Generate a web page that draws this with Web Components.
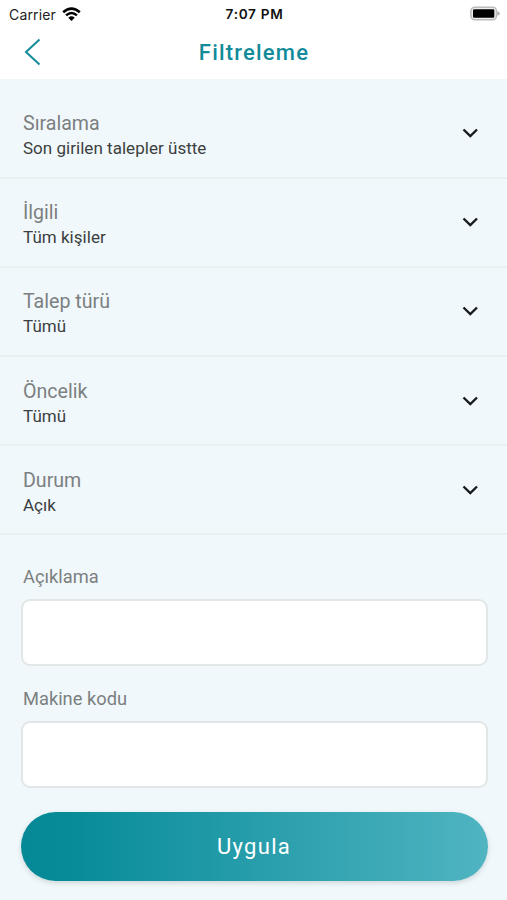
<!DOCTYPE html>
<html lang="tr">
<head>
<meta charset="utf-8">
<title>Filtreleme</title>
<style>
html,body{margin:0;height:100%;background:#f0f8fb}
body{font-family:Roboto,"Open Sans",sans-serif;overflow:hidden}
</style>
</head>
<body>
<filter-screen></filter-screen>
<script>
const define = (name, html) => {
  const t = document.createElement('template');
  t.innerHTML = html;
  customElements.define(name, class extends HTMLElement {
    constructor() {
      super();
      this.attachShadow({mode: 'open'}).appendChild(t.content.cloneNode(true));
    }
  });
};

define('status-bar', `
<style>
:host{display:grid;grid-template-columns:1fr auto 1fr;align-items:center;height:27px;padding:0 7px 0 9px;box-sizing:border-box;
 font:14px/27px Inter,"Liberation Sans",sans-serif;color:#111}
.left{display:flex;align-items:center;gap:6px}
.carrier{font-size:14px;letter-spacing:.15px;color:#222;padding-top:1px}
.time{font-weight:600;font-size:13.600px;letter-spacing:.7px;padding-top:1px}
.battery{justify-self:end;display:block}
svg{display:block}
</style>
<div class="left"><span class="carrier">Carrier</span>
<svg width="19" height="15" viewBox="0 0 19 15" fill="none" stroke="#000" stroke-width="2.600"><path d="M1.200 5.200Q9.500 -1.900 17.800 5.200"/><path d="M4.100 8.400Q9.500 3.600 14.900 8.400"/><path d="M9.500 14L6.300 10.700Q9.500 8 12.700 10.700Z" fill="#000" stroke="none"/></svg></div>
<span class="time">7:07 PM</span>
<svg class="battery" width="31" height="16" viewBox="0 0 31 16"><rect x="1.900" y="1.200" width="25.600" height="12.600" rx="4" fill="#eee" stroke="#bcbcbc" stroke-width="1.600"/><rect x="4" y="3.200" width="21.300" height="8.600" rx="1.200" fill="#000"/><path d="M28.400 5.300Q30.800 6.300 30.800 7.500T28.400 9.700Z" fill="#aaa"/></svg>`);

define('nav-header', `
<style>
:host{display:grid;grid-template-columns:60px 1fr 60px;align-items:center;height:52px;color:#128b9a}
svg{display:block;margin:-2px 0 0 24px}
.title{text-align:center;font-size:22px;font-weight:500;letter-spacing:1.200px;line-height:26px;padding-left:1px}
</style>
<svg width="18" height="28" viewBox="0 0 18 28" fill="none" stroke="currentColor" stroke-width="2"><path d="M15.500 1.500L2 14L15.500 26.500"/></svg>
<span class="title"><slot></slot></span>`);

define('filter-row', `
<style>
:host{display:flex;justify-content:space-between;align-items:center;height:89.200px;box-sizing:border-box;padding:0 28px 0 23px;border-bottom:2px solid #eaf1f3}
.text{padding-top:6px}
.label{font-size:19.600px;line-height:24px;color:#7c7f80}
.value{font-size:17px;letter-spacing:.03px;line-height:24px;color:#3c3f40}
svg{display:block}
</style>
<div class="text"><div class="label"><slot name="label"></slot></div><div class="value"><slot></slot></div></div>
<svg width="18" height="12" viewBox="0 0 18 12" fill="none" stroke="#171b1d" stroke-width="2.400"><path d="M2.500 2.500L9.300 9L16 2.500"/></svg>`);

define('text-field', `
<style>
:host{display:block}
.label{display:block;font-size:18.300px;line-height:24px;padding-left:2px;color:#7c7f80;margin-bottom:10px}
.box{height:67px;box-sizing:border-box;border:2px solid #e1e6e7;border-radius:9px;background:#fff}
</style>
<span class="label"><slot></slot></span><div class="box"></div>`);

define('apply-button', `
<style>
:host{display:flex;align-items:center;justify-content:center;height:69px;border-radius:35px;color:#fff;
 font-size:22px;letter-spacing:1.300px;background:linear-gradient(90deg,#058997 0%,#078b99 10%,#50b4c1 100%);box-shadow:0 2px 5px rgba(80,90,90,.22)}
</style>
<slot></slot>`);

define('filter-screen', `
<style>
:host{display:flex;flex-direction:column;height:900px;background:#f0f8fb}
.top{background:#fff;height:79px}
.rows{padding-top:10.400px}
.form{display:flex;flex-direction:column;gap:21px;padding:29.200px 19.500px 0 21px}
apply-button{margin-top:3px;margin-left:-.5px}
</style>
<div class="top"><status-bar></status-bar><nav-header>Filtreleme</nav-header></div>
<div class="rows">
<filter-row><span slot="label">Sıralama</span>Son girilen talepler üstte</filter-row>
<filter-row><span slot="label">İlgili</span>Tüm kişiler</filter-row>
<filter-row><span slot="label">Talep türü</span>Tümü</filter-row>
<filter-row><span slot="label">Öncelik</span>Tümü</filter-row>
<filter-row><span slot="label">Durum</span>Açık</filter-row>
</div>
<div class="form"><text-field>Açıklama</text-field><text-field>Makine kodu</text-field><apply-button>Uygula</apply-button></div>`);
</script>
</body>
</html>
